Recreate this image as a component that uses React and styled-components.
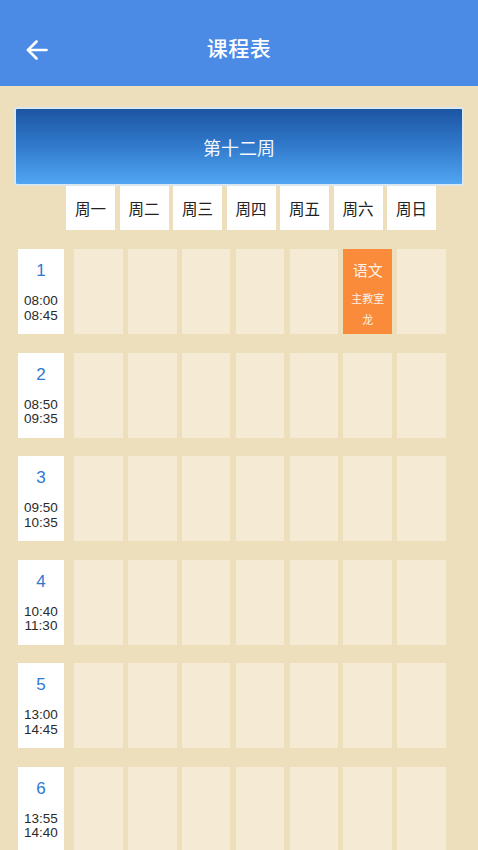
import React from "react";
import styled, { createGlobalStyle } from "styled-components";

const Global = createGlobalStyle`
  html, body { margin: 0; padding: 0; overflow: hidden; }
  body { background: #eedfbc; font-family: "Liberation Sans", "Noto Sans CJK SC", sans-serif; }
`;

const Page = styled.div`
  width: 478px;
  height: 850px;
  overflow: hidden;
  background: #eedfbc;
`;

const Header = styled.header`
  height: 86px;
  box-sizing: border-box;
  padding-top: 8px;
  background: #4b8be6;
  display: flex;
  align-items: center;
  justify-content: center;
  position: relative;
`;

const BackButton = styled.button`
  position: absolute;
  left: 24px;
  top: 37px;
  width: 26px;
  height: 26px;
  padding: 0;
  border: none;
  background: transparent;
  display: flex;
  align-items: center;
  justify-content: center;
`;

const Title = styled.h1`
  margin: 0;
  color: #fff;
  font-size: 21px;
  font-weight: 500;
  letter-spacing: 0.5px;
`;

const Content = styled.main`
  padding: 21px 14px 0 14px;
`;

const WeekBanner = styled.div`
  height: 75px;
  border: 2px solid #dbe7ee;
  border-radius: 3px;
  background: linear-gradient(to bottom, #1c55a2 0%, #2f76c8 45%, #50a6f2 100%);
  display: flex;
  align-items: center;
  justify-content: center;
  color: #f4f8fc;
  font-size: 18px;
`;

const DayRow = styled.div`
  display: grid;
  grid-template-columns: repeat(7, 49px);
  column-gap: 4.5px;
  padding-left: 52px;
`;

const DayCell = styled.div`
  height: 44px;
  background: #fff;
  display: flex;
  align-items: center;
  justify-content: center;
  font-size: 15.5px;
  color: #222;
`;

const Table = styled.div`
  margin-top: 19px;
  padding-left: 4px;
  display: flex;
  flex-direction: column;
  gap: 18.5px;
`;

const Row = styled.div`
  display: flex;
  height: 85px;
`;

const PeriodCell = styled.div`
  width: 46px;
  background: #fff;
  display: flex;
  flex-direction: column;
  align-items: center;
  padding-top: 12px;
  box-sizing: border-box;
`;

const PeriodNo = styled.div`
  color: #2f78cf;
  font-size: 17px;
  line-height: 20px;
  margin-bottom: 13px;
`;

const Time = styled.div`
  color: #2a2a2a;
  font-size: 13.5px;
  line-height: 14.5px;
`;

const Cells = styled.div`
  margin-left: 10px;
  width: 372px;
  display: grid;
  grid-template-columns: repeat(7, 1fr);
  column-gap: 5.2px;
`;

const Cell = styled.div`
  background: ${(p) => (p.$active ? "#f98b3b" : "#f5ead4")};
  display: flex;
  flex-direction: column;
  align-items: center;
  padding-top: 12px;
  box-sizing: border-box;
  color: #fdf1e6;
`;

const Course = styled.div`
  font-size: 15px;
  line-height: 20px;
`;

const Small = styled.div`
  font-size: 11px;
  line-height: 14px;
  margin-top: ${(p) => p.$mt || 0}px;
`;

const days = ["周一", "周二", "周三", "周四", "周五", "周六", "周日"];
const periods = [
  ["1", "08:00", "08:45"],
  ["2", "08:50", "09:35"],
  ["3", "09:50", "10:35"],
  ["4", "10:40", "11:30"],
  ["5", "13:00", "14:45"],
  ["6", "13:55", "14:40"],
];

export default function App() {
  return (
    <Page>
      <Global />
      <Header>
        <BackButton aria-label="返回">
          <svg width="22" height="20" viewBox="0 0 22 20" fill="none" stroke="#fff" strokeWidth="2.6" strokeLinecap="round" strokeLinejoin="round">
            <path d="M20.5 10H2" />
            <path d="M10.5 1.5L2 10l8.5 8.5" />
          </svg>
        </BackButton>
        <Title>课程表</Title>
      </Header>
      <Content>
        <WeekBanner>第十二周</WeekBanner>
        <DayRow>
          {days.map((d) => (
            <DayCell key={d}>{d}</DayCell>
          ))}
        </DayRow>
        <Table>
          {periods.map(([no, start, end], ri) => (
            <Row key={no}>
              <PeriodCell>
                <PeriodNo>{no}</PeriodNo>
                <Time>{start}</Time>
                <Time>{end}</Time>
              </PeriodCell>
              <Cells>
                {days.map((d, di) =>
                  ri === 0 && di === 5 ? (
                    <Cell key={d} $active>
                      <Course>语文</Course>
                      <Small $mt={11}>主教室</Small>
                      <Small $mt={7}>龙</Small>
                    </Cell>
                  ) : (
                    <Cell key={d} />
                  )
                )}
              </Cells>
            </Row>
          ))}
        </Table>
      </Content>
    </Page>
  );
}
